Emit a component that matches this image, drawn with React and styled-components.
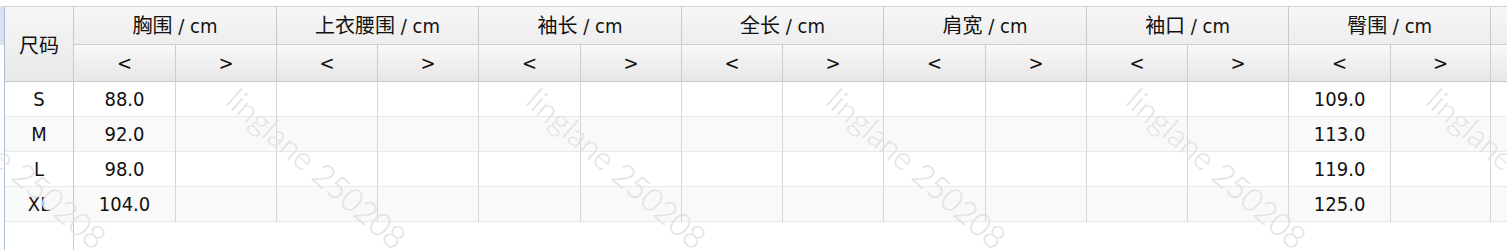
import React from 'react';
import styled, { createGlobalStyle } from 'styled-components';

const GlobalStyle = createGlobalStyle`
  html, body {
    margin: 0;
    padding: 0;
    background: #fff;
    overflow: hidden;
  }
  body {
    font-family: "DejaVu Sans Condensed", "DejaVu Sans", "Noto Sans CJK SC", sans-serif;
    font-stretch: condensed;
    color: #111;
  }
`;

const groups = ['胸围', '上衣腰围', '袖长', '全长', '肩宽', '袖口', '臀围', ''];

// border-box widths of the scrolling columns, right border included
const colWidths = [102, 101, 101, 101, 102, 101, 101, 101, 102, 101, 101, 101, 102, 100, 101, 101];
const tableWidth = colWidths.reduce((a, b) => a + b, 0);

const rows = [
  { size: 'S', values: { 0: '88.0', 12: '109.0' } },
  { size: 'M', values: { 0: '92.0', 12: '113.0' } },
  { size: 'L', values: { 0: '98.0', 12: '119.0' } },
  { size: 'XL', values: { 0: '104.0', 12: '125.0' } },
];

const marks = [17, 317, 617, 917, 1217, 1517];

export default function App() {
  return (
    <>
      <GlobalStyle />
      <Page>
        <EdgeStrip>
          <EdgeTab />
        </EdgeStrip>
        <Grid>
          <Frozen>
            <FrozenHead>尺码</FrozenHead>
            {rows.map((r, i) => (
              <FrozenCell key={r.size} $alt={i % 2 === 1}>{r.size}</FrozenCell>
            ))}
          </Frozen>
          <Main>
            <Table style={{ width: tableWidth }}>
              <colgroup>
                {colWidths.map((w, i) => <col key={i} style={{ width: w }} />)}
              </colgroup>
              <thead>
                <tr>
                  {groups.map((g, i) => (
                    <GroupCell key={i} colSpan={2}>{g ? `${g} / cm` : ''}</GroupCell>
                  ))}
                </tr>
                <tr>
                  {groups.map((g, i) => (
                    <React.Fragment key={i}>
                      <SubCell>{g ? '<' : ''}</SubCell>
                      <SubCell>{g ? '>' : ''}</SubCell>
                    </React.Fragment>
                  ))}
                </tr>
              </thead>
              <tbody>
                {rows.map((r, i) => (
                  <BodyRow key={r.size} $alt={i % 2 === 1}>
                    {colWidths.map((_, c) => <Cell key={c}>{r.values[c] || ''}</Cell>)}
                  </BodyRow>
                ))}
              </tbody>
            </Table>
          </Main>
        </Grid>
        <Watermarks>
          {marks.map((x) => (
            <Mark key={x} style={{ left: x }}>linglane 250208</Mark>
          ))}
        </Watermarks>
      </Page>
    </>
  );
}

const Page = styled.div`
  position: relative;
  display: flex;
  height: 250px;
  padding-top: 6px;
  box-sizing: border-box;
  overflow: hidden;
`;

const EdgeStrip = styled.div`
  width: 4px;
  flex: none;
`;

const EdgeTab = styled.div`
  height: 39px;
  background: #d6e3f1;
`;

const Grid = styled.div`
  display: flex;
  flex: 1;
  min-width: 0;
  border-top: 1px solid #d3d3d3;
  border-left: 1px solid #a9bccf;
`;

const Frozen = styled.div`
  display: flex;
  flex-direction: column;
  width: 69px;
  flex: none;
  box-sizing: border-box;
  border-right: 1px solid #c9c9c9;
`;

const FrozenHead = styled.div`
  display: flex;
  align-items: center;
  justify-content: center;
  height: 75px;
  box-sizing: border-box;
  border-bottom: 1px solid #c9c9c9;
  background: linear-gradient(#f6f6f6, #e9e9e9);
  font-size: 20px;
`;

const FrozenCell = styled.div`
  display: flex;
  align-items: center;
  justify-content: center;
  height: 35px;
  box-sizing: border-box;
  border-bottom: 1px solid #e9e9e9;
  background: ${(p) => (p.$alt ? '#f9f9f9' : '#fff')};
  font-size: 20px;
`;

const Main = styled.div`
  flex: 1;
  min-width: 0;
  overflow: hidden;
`;

const Table = styled.table`
  border-collapse: separate;
  border-spacing: 0;
  table-layout: fixed;
  font-size: 20px;

  th, td {
    box-sizing: border-box;
    padding: 0;
    text-align: center;
    white-space: nowrap;
    overflow: hidden;
  }
`;

const GroupCell = styled.th`
  height: 38px;
  padding-bottom: 2px !important;
  font-weight: normal;
  border-right: 1px solid #c9c9c9;
  border-bottom: 1px solid #cdcdcd;
  background: linear-gradient(#f7f7f7, #ededed);
`;

const SubCell = styled.th`
  height: 37px;
  font-weight: normal;
  border-right: 1px solid #cdcdcd;
  border-bottom: 1px solid #c9c9c9;
  background: linear-gradient(#f8f8f8, #e7e7e7);
`;

const BodyRow = styled.tr`
  background: ${(p) => (p.$alt ? '#f9f9f9' : '#fff')};
`;

const Cell = styled.td`
  height: 35px;
  border-right: 1px solid #d6d6d6;
  border-bottom: 1px solid #e9e9e9;
`;

const Watermarks = styled.div`
  position: absolute;
  top: 82px;
  left: 0;
  right: 0;
  bottom: 0;
  overflow: hidden;
  pointer-events: none;
`;

const Mark = styled.span`
  position: absolute;
  top: 86px;
  transform: translate(-50%, -50%) rotate(41deg);
  font-family: Lato, "DejaVu Sans", sans-serif;
  font-weight: 300;
  font-stretch: normal;
  font-size: 32px;
  color: #e2e2e2;
  white-space: nowrap;
`;
